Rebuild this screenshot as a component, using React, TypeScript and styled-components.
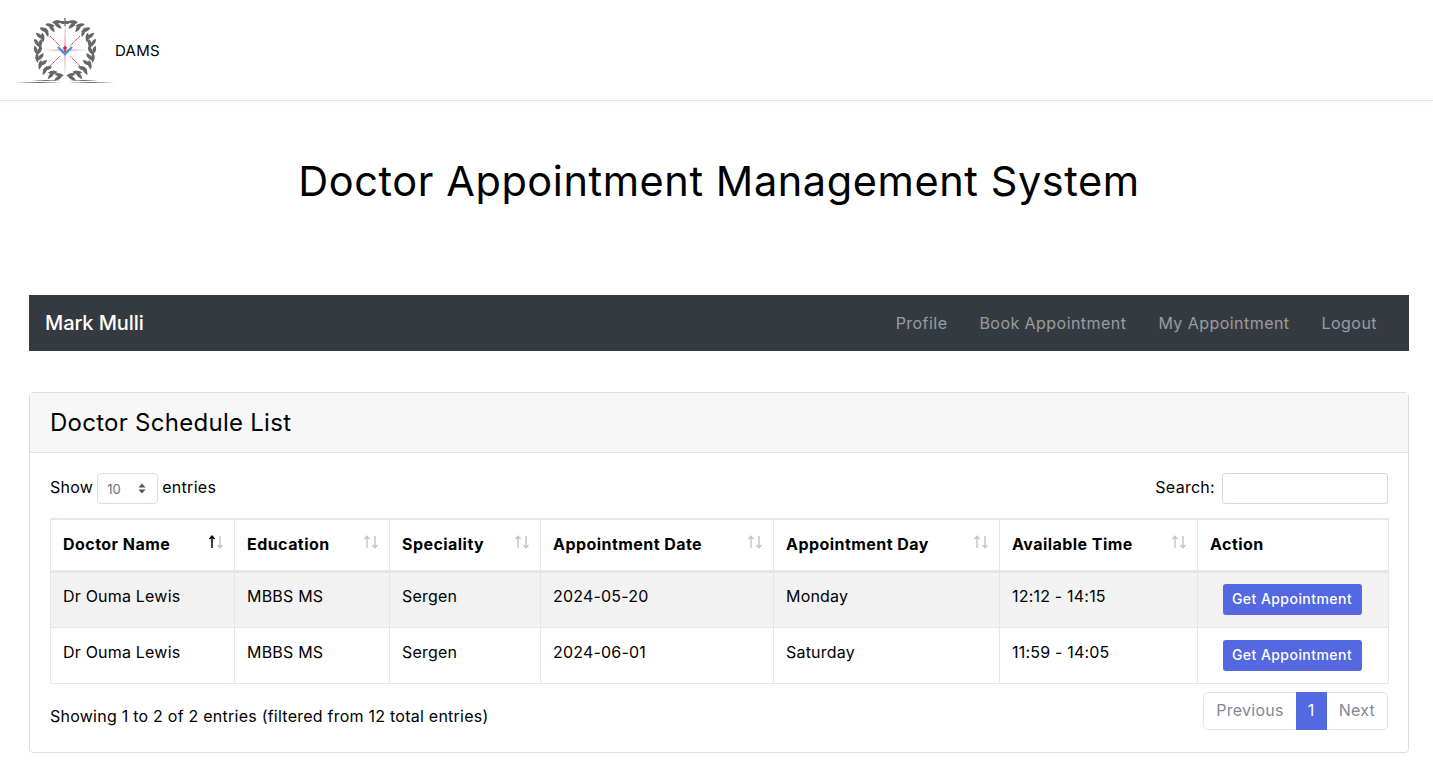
import styled, { createGlobalStyle } from 'styled-components';

const GlobalStyle = createGlobalStyle`
  * { box-sizing: border-box; }
  body {
    margin: 0;
    background: #fff;
    color: #000;
    font-family: Inter, "Noto Sans", "Liberation Sans", sans-serif;
    font-size: 16px;
  }
`;

const TopBar = styled.nav`
  display: flex;
  align-items: center;
  height: 101px;
  background: #fff;
  border-bottom: 1px solid #e5e5e5;
  box-shadow: 0 2px 6px rgba(0, 0, 0, 0.03);
`;

const Brand = styled.a`
  display: flex;
  align-items: center;
  padding-left: 15px;
  font-size: 15px;
  letter-spacing: 0.3px;
  color: #000;
`;

const Title = styled.h1`
  margin: 0;
  padding: 56px 0 0 5px;
  height: 194px;
  text-align: center;
  font-size: 41.5px;
  line-height: 48px;
  font-weight: 400;
  letter-spacing: 0.57px;
`;

const Content = styled.main`
  padding: 0 24px 18px 29px;
`;

const DarkNav = styled.div`
  display: flex;
  align-items: center;
  justify-content: space-between;
  height: 56px;
  padding: 0 16px;
  background: #343a40;
`;

const DarkBrand = styled.a`
  font-size: 20px;
  font-weight: 500;
  letter-spacing: -0.1px;
  color: #fff;
`;

const NavLinks = styled.div`
  display: flex;
`;

const NavLink = styled.a`
  padding: 0 16px;
  font-size: 16px;
  letter-spacing: 0.45px;
  color: rgba(255, 255, 255, 0.5);
`;

const Card = styled.section`
  margin-top: 41px;
  border: 1px solid #dfdfe3;
  border-radius: 4px;
`;

const CardHeader = styled.header`
  height: 60px;
  padding: 0 20px;
  display: flex;
  align-items: center;
  background: #f7f7f7;
  border-bottom: 1px solid #dfdfe3;
  font-size: 24px;
  font-weight: 400;
  letter-spacing: 0.27px;
`;

const CardBody = styled.div`
  padding: 20px 20px 22px;
`;

const Controls = styled.div`
  display: flex;
  align-items: center;
  justify-content: space-between;
  height: 31px;
  margin-bottom: 14px;
  font-size: 16px;
  letter-spacing: 0.28px;
`;

const Label = styled.label`
  display: flex;
  align-items: center;
  gap: 4px;
  padding-bottom: 3px;
`;

const SelectBox = styled.span`
  display: flex;
  align-items: center;
  justify-content: space-between;
  width: 61px;
  height: 31px;
  margin-bottom: -3px;
  padding: 0 11px 0 9px;
  border: 1px solid #dcdce8;
  border-radius: 4px;
  font-size: 13px;
  letter-spacing: 0;
  color: #6e707e;
`;

const SearchInput = styled.input`
  width: 166px;
  height: 31px;
  margin: 0 0 -3px 3px;
  border: 1px solid #d6d6e2;
  border-radius: 3px;
  outline: none;
`;

const Table = styled.table`
  width: 100%;
  table-layout: fixed;
  border-collapse: collapse;
  font-size: 16px;
  letter-spacing: 0.2px;
`;

const HeadCell = styled.th`
  position: relative;
  height: 52px;
  padding: 0 12px 1px;
  text-align: left;
  font-weight: 700;
  font-size: 16px;
  letter-spacing: 0.45px;
  border: 1px solid #e3e6f0;
  border-width: 2px 1px 3px;
`;

const Cell = styled.td`
  height: 56px;
  padding: 0 12px 7px;
  border: 1px solid #e3e6f0;
`;

const Row = styled.tr<{ $striped?: boolean }>`
  background: ${(p) => (p.$striped ? '#f2f2f2' : '#fff')};
`;

const SortIcon = styled.svg`
  position: absolute;
  top: 15px;
  right: 10px;
`;

const ActionCell = styled(Cell)`
  padding: 0 14px 0 12px;
  text-align: center;
`;

const ActionButton = styled.button`
  width: 139px;
  height: 31px;
  padding: 0 0 2px;
  border: none;
  border-radius: 3px;
  background: #5468e0;
  color: #fff;
  font-family: inherit;
  font-size: 14px;
  font-weight: 500;
  letter-spacing: 0.45px;
`;

const Footer = styled.div`
  display: flex;
  align-items: flex-start;
  justify-content: space-between;
  margin-top: 8px;
  font-size: 16px;
  letter-spacing: 0.24px;
`;

const Info = styled.div`
  padding-top: 14px;
`;

const Pager = styled.div`
  display: flex;
  height: 38px;
  border: 1px solid #e3e3ee;
  border-radius: 5px;
  font-size: 16px;
  letter-spacing: 0.25px;
  color: #858796;
`;

const PageItem = styled.span<{ $active?: boolean }>`
  display: flex;
  align-items: center;
  justify-content: center;
  margin: ${(p) => (p.$active ? '-1px 0' : '0')};
  padding: 0 12px 2px;
  min-width: 31px;
  background: ${(p) => (p.$active ? '#5468e0' : 'transparent')};
  color: ${(p) => (p.$active ? '#fff' : 'inherit')};
`;

const columns = [
  { name: 'Doctor Name', width: 184, active: true },
  { name: 'Education', width: 155 },
  { name: 'Speciality', width: 151 },
  { name: 'Appointment Date', width: 233 },
  { name: 'Appointment Day', width: 226 },
  { name: 'Available Time', width: 198 },
  { name: 'Action', width: 191, plain: true },
];

const rows = [
  ['Dr Ouma Lewis', 'MBBS MS', 'Sergen', '2024-05-20', 'Monday', '12:12 - 14:15'],
  ['Dr Ouma Lewis', 'MBBS MS', 'Sergen', '2024-06-01', 'Saturday', '11:59 - 14:05'],
];

const LEAF = 'M-5 0Q-1 -3.6 5 0Q-1 3.6 -5 0Z';

// leaves of the left branch, the right one is the same group mirrored
const leaves = Array.from({ length: 11 }, (_, i) => {
  const deg = 14 + i * 15;
  const t = (deg * Math.PI) / 180;
  return [
    { x: 50 - 29 * Math.sin(t), y: 34 + 29 * Math.cos(t), rot: 160 - deg },
    { x: 50 - 25.5 * Math.sin(t), y: 34 + 25.5 * Math.cos(t), rot: 205 - deg },
  ];
}).flat();

const Logo = () => (
  <svg width="100" height="68" viewBox="0 0 100 68" aria-hidden="true">
    <defs>
      <linearGradient id="fadeX">
        <stop offset="0" stopColor="#666" stopOpacity="0" />
        <stop offset="0.5" stopColor="#666" />
        <stop offset="1" stopColor="#666" stopOpacity="0" />
      </linearGradient>
      <linearGradient id="pinkX">
        <stop offset="0" stopColor="#f28aa2" stopOpacity="0.1" />
        <stop offset="0.5" stopColor="#f28aa2" />
        <stop offset="1" stopColor="#f28aa2" stopOpacity="0.1" />
      </linearGradient>
      <linearGradient id="pinkY" x1="0" x2="0" y1="0" y2="1">
        <stop offset="0" stopColor="#f28aa2" stopOpacity="0.1" />
        <stop offset="0.5" stopColor="#f28aa2" />
        <stop offset="1" stopColor="#f28aa2" stopOpacity="0.1" />
      </linearGradient>
    </defs>
    <g fill="#666">
      {leaves.map((l, i) => (
        <path key={i} d={LEAF} transform={`translate(${l.x} ${l.y}) rotate(${l.rot})`} />
      ))}
    </g>
    <g fill="#666" transform="translate(100 0) scale(-1 1)">
      {leaves.map((l, i) => (
        <path key={i} d={LEAF} transform={`translate(${l.x} ${l.y}) rotate(${l.rot})`} />
      ))}
    </g>
    <rect x="49.3" y="4" width="1.4" height="56" fill="url(#pinkY)" />
    <rect x="29" y="33.4" width="42" height="1.4" fill="url(#pinkX)" />
    <path d="M35 20L45 30M65 20L55 30M35 50L45 40M65 50L55 40" stroke="#ee2f56" strokeWidth="1" strokeDasharray="1.6 .4" />
    <path d="M43 31L50 38L57 31" stroke="#3f95d6" strokeWidth="2.4" fill="none" />
    <path d="M50 30V36M48 32H52" stroke="#d8232f" strokeWidth="1.4" />
    <path d="M40 3.5C44 5.5 56 5.5 60 3.5L53 8H47Z" fill="#666" />
    <rect x="49.3" y="2" width="1.4" height="8" fill="#777" />
    <rect x="16" y="64" width="30" height="1" fill="url(#fadeX)" />
    <rect x="54" y="64" width="30" height="1" fill="url(#fadeX)" />
    <rect x="0" y="66" width="48" height="1" fill="url(#fadeX)" />
    <rect x="52" y="66" width="48" height="1" fill="url(#fadeX)" />
  </svg>
);

const SelectArrows = () => (
  <svg width="8" height="11" viewBox="0 0 8 11" aria-hidden="true">
    <path d="M4 0.5L7.5 4.5H0.5ZM4 10.5L0.5 6.5H7.5Z" fill="#555" />
  </svg>
);

const SortArrows = ({ active }: { active?: boolean }) => (
  <SortIcon width="16" height="14" viewBox="0 0 16 14" fill="none" aria-hidden="true">
    <path
      d="M4 13V1.5M1.5 4L4 1.2L6.5 4"
      stroke={active ? '#000' : '#c4c4c4'}
      strokeWidth={active ? 1.5 : 1.4}
    />
    <path d="M12 1V12.5M9.5 10L12 12.8L14.5 10" stroke="#c4c4c4" strokeWidth="1.4" />
  </SortIcon>
);

export default function App() {
  return (
    <>
      <GlobalStyle />
      <TopBar>
        <Brand>
          <Logo />
          DAMS
        </Brand>
      </TopBar>
      <Title>Doctor Appointment Management System</Title>
      <Content>
        <DarkNav>
          <DarkBrand>Mark Mulli</DarkBrand>
          <NavLinks>
            <NavLink>Profile</NavLink>
            <NavLink>Book Appointment</NavLink>
            <NavLink>My Appointment</NavLink>
            <NavLink>Logout</NavLink>
          </NavLinks>
        </DarkNav>
        <Card>
          <CardHeader>Doctor Schedule List</CardHeader>
          <CardBody>
            <Controls>
              <Label>
                Show
                <SelectBox>
                  10
                  <SelectArrows />
                </SelectBox>
                entries
              </Label>
              <Label>
                Search:
                <SearchInput type="search" />
              </Label>
            </Controls>
            <Table>
              <colgroup>
                {columns.map((c) => (
                  <col key={c.name} width={c.width} />
                ))}
              </colgroup>
              <thead>
                <tr>
                  {columns.map((c) => (
                    <HeadCell key={c.name}>
                      {c.name}
                      {!c.plain && <SortArrows active={c.active} />}
                    </HeadCell>
                  ))}
                </tr>
              </thead>
              <tbody>
                {rows.map((r, i) => (
                  <Row key={r[3]} $striped={i === 0}>
                    {r.map((v, j) => (
                      <Cell key={j}>{v}</Cell>
                    ))}
                    <ActionCell>
                      <ActionButton>Get Appointment</ActionButton>
                    </ActionCell>
                  </Row>
                ))}
              </tbody>
            </Table>
            <Footer>
              <Info>Showing 1 to 2 of 2 entries (filtered from 12 total entries)</Info>
              <Pager>
                <PageItem>Previous</PageItem>
                <PageItem $active>1</PageItem>
                <PageItem>Next</PageItem>
              </Pager>
            </Footer>
          </CardBody>
        </Card>
      </Content>
    </>
  );
}
